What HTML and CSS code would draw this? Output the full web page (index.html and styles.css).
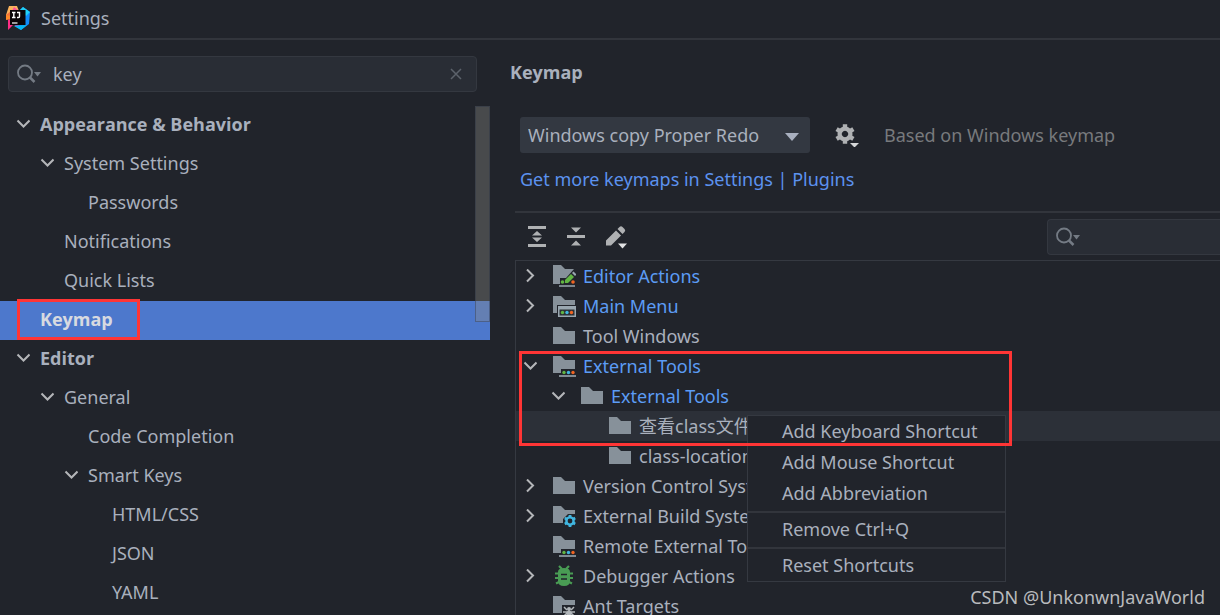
FILE: index.html
```html
<!DOCTYPE html>
<html lang="en">
<head>
<meta charset="utf-8">
<title>Settings</title>
<link rel="stylesheet" href="styles.css">
</head>
<body>
<svg class="defs" aria-hidden="true">
  <symbol id="down" viewBox="0 0 14 14"><path d="M1.500 3.500l6 6 6-6" fill="none" stroke="#b4b6b9" stroke-width="2"/></symbol>
  <symbol id="right" viewBox="0 0 14 14"><path d="M4 .5l6 6-6 6" fill="none" stroke="#b4b6b9" stroke-width="2"/></symbol>
  <symbol id="folder" viewBox="0 0 24 24"><path d="M1 3h8l4 4h10v13H1z" fill="#87919a"/></symbol>
  <symbol id="search" viewBox="0 0 26 20"><circle cx="8" cy="8.500" r="7" fill="none" stroke="#747b84" stroke-width="1.800"/><path d="M12.500 13l5 5" stroke="#747b84" stroke-width="2.500"/><path d="M17 8h7l-3.500 4.500z" fill="#747b84"/></symbol>
  <symbol id="tools" viewBox="0 0 24 24"><path d="M1 2h8l4 4h10v9H9v4H1z" fill="#87919a"/><circle cx="12" cy="18.500" r="1.700" fill="#62b543"/><circle cx="16.500" cy="18.500" r="1.700" fill="#40b6e0"/><circle cx="21" cy="18.500" r="1.700" fill="#f26522"/><path d="M7 22h17" stroke="#9aa7b0" stroke-width="1.600"/></symbol>
</svg>
<header class="titlebar">
  <svg class="logo" viewBox="0 0 24 24" aria-hidden="true">
    <path d="M3 0h8l2 5-9 5-4-1z" fill="#fbb35d"/><path d="M0 9l5-4v9l-5-1z" fill="#f4713a"/><path d="M0 9l5 1v3l-5 1z" fill="#ff8a2a"/><path d="M8 1l5 4H6z" fill="#fe4f9a"/><path d="M14 4l3-3 7 5-1 12-8 6-6-4z" fill="#118bfa"/><path d="M17 1l7 5-4 4-6-6z" fill="#20cff5"/><path d="M2 14l4-1 7 7-6-1-5 5z" fill="#fe2d86"/><path d="M8 20l7 4 6-5z" fill="#07b7f2"/><path d="M4 4h15.500v15H4z" fill="#0b0508"/><path d="M6 6.500h3.500M7.800 6.500v5M6 11.500h3.500M11 6.500h2.500v4q0 1-1 1H11" fill="none" stroke="#fff" stroke-width="1.400"/><path d="M6 17h5.500" stroke="#ddd" stroke-width="1.400"/>
  </svg>
  <span>Settings</span>
</header>
<div class="layout">
  <aside class="sidebar">
    <div class="search">
      <svg class="search-icon" aria-hidden="true"><use href="#search"/></svg>
      <input type="text" value="key" aria-label="Search settings">
      <button class="clear" aria-label="Clear search"><svg viewBox="0 0 12 12"><path d="M1 1l10 10M11 1L1 11" stroke="#5c626b" stroke-width="1.500"/></svg></button>
    </div>
    <div class="nav-area">
      <ul class="nav">
        <li class="strong"><button class="toggle" aria-label="Collapse Appearance &amp; Behavior"><svg><use href="#down"/></svg></button><span>Appearance &amp; Behavior</span></li>
        <li class="level1"><button class="toggle" aria-label="Collapse System Settings"><svg><use href="#down"/></svg></button><span>System Settings</span></li>
        <li class="level2 leaf">Passwords</li>
        <li class="level1 leaf">Notifications</li>
        <li class="level1 leaf">Quick Lists</li>
        <li class="strong leaf selected">Keymap<span class="mark mark-nav"></span></li>
        <li class="strong"><button class="toggle" aria-label="Collapse Editor"><svg><use href="#down"/></svg></button><span>Editor</span></li>
        <li class="level1"><button class="toggle" aria-label="Collapse General"><svg><use href="#down"/></svg></button><span>General</span></li>
        <li class="level2 leaf">Code Completion</li>
        <li class="level2"><button class="toggle" aria-label="Collapse Smart Keys"><svg><use href="#down"/></svg></button><span>Smart Keys</span></li>
        <li class="level3 leaf">HTML/CSS</li>
        <li class="level3 leaf">JSON</li>
        <li class="level3 leaf">YAML</li>
      </ul>
      <div class="scrollbar"></div>
    </div>
  </aside>
  <main class="content">
    <h1>Keymap</h1>
    <div class="scheme">
      <div class="select">
        <select aria-label="Keymap scheme"><option>Windows copy Proper Redo</option></select>
        <svg viewBox="0 0 14 8" aria-hidden="true"><path d="M0 0h14L7 8z" fill="#a9b0bf"/></svg>
      </div>
      <button class="icon gear" aria-label="Keymap actions"><svg viewBox="0 0 24 24"><g fill="#afb1b3"><path fill-rule="evenodd" d="M10 3.500a7.500 7.500 0 1 0 .01 0zM10 7.800a3.200 3.200 0 1 1-.01 0z"/><path d="M7.800 1.300h4.400v4H7.800zM7.800 16.700h4.400v4H7.800z"/><path d="M7.800 1.300h4.400v4H7.800zM7.800 16.700h4.400v4H7.800z" transform="rotate(60 10 11)"/><path d="M7.800 1.300h4.400v4H7.800zM7.800 16.700h4.400v4H7.800z" transform="rotate(120 10 11)"/></g><path d="M15 20h9l-4.500 4.500z" fill="#d6d7d9"/></svg></button>
      <span class="hint">Based on Windows keymap</span>
    </div>
    <a class="link" href="#plugins">Get more keymaps in Settings | Plugins</a>
    <section class="actions">
      <div class="toolbar">
        <button class="icon" aria-label="Expand all"><svg viewBox="0 0 24 24"><path d="M3 2.500h18M3 20.500h18" stroke="#afb1b3" stroke-width="3"/><path d="M12 6l5 4.500H7zM12 17l5-4.500H7z" fill="#afb1b3"/></svg></button>
        <button class="icon" aria-label="Collapse all"><svg viewBox="0 0 24 24"><path d="M3 11.500h18" stroke="#afb1b3" stroke-width="3"/><path d="M7 2.500h10l-5 5zM7 20.500h10l-5-5z" fill="#afb1b3"/></svg></button>
        <button class="icon" aria-label="Edit shortcut"><svg viewBox="0 0 24 24"><path d="M3 20.500v-5L13 5.500l5 5L8 20.500zM14.500 4l2-2q1.500-1.500 3 0l2 2q1.500 1.500 0 3l-2 2z" fill="#afb1b3"/><path d="M15 18.500h9l-4.500 5z" fill="#e1e2e3"/></svg></button>
        <div class="search action-search">
          <svg class="search-icon" aria-hidden="true"><use href="#search"/></svg>
          <input type="text" aria-label="Search actions">
        </div>
      </div>
      <div class="tree-area">
        <ul class="tree">
          <li><button class="toggle" aria-label="Expand Editor Actions"><svg><use href="#right"/></svg></button><svg class="kind" viewBox="0 0 24 24"><path d="M1 1h8l4 4h9l-8 9H8v6H1z" fill="#87919a"/><circle cx="10.500" cy="18" r="1.800" fill="#62b543"/><circle cx="21" cy="18" r="1.800" fill="#f26522"/><path d="M13 19v-3l6-6 3 3-6 6z" fill="#62b543"/><path d="M20 9l1.500-1.500 3 3L23 12z" fill="#9aa7b0"/><path d="M7 22h16" stroke="#9aa7b0" stroke-width="1.500"/></svg><span class="changed">Editor Actions</span></li>
          <li><button class="toggle" aria-label="Expand Main Menu"><svg><use href="#right"/></svg></button><svg class="kind" viewBox="0 0 24 24"><path d="M1 2h8l4 4h10v5H5v8H1z" fill="#87919a"/><path d="M6 12h18v11H6z" fill="#9aa7b0"/><path d="M7.500 15.500h15V21.500h-15z" fill="#2b3035"/><circle cx="10.500" cy="18.500" r="1.700" fill="#62b543"/><circle cx="15" cy="18.500" r="1.700" fill="#40b6e0"/><circle cx="19.500" cy="18.500" r="1.700" fill="#f26522"/></svg><span class="changed">Main Menu</span></li>
          <li class="no-toggle"><svg class="kind"><use href="#folder"/></svg><span>Tool Windows</span></li>
          <li><button class="toggle" aria-label="Collapse External Tools"><svg><use href="#down"/></svg></button><svg class="kind"><use href="#tools"/></svg><span class="changed">External Tools</span></li>
          <li class="level1"><button class="toggle" aria-label="Collapse External Tools group"><svg><use href="#down"/></svg></button><svg class="kind"><use href="#folder"/></svg><span class="changed">External Tools</span></li>
          <li class="level2 no-toggle current"><svg class="kind"><use href="#folder"/></svg><span>查看class文件</span></li>
          <li class="level2 no-toggle"><svg class="kind"><use href="#folder"/></svg><span>class-location</span></li>
          <li><button class="toggle" aria-label="Expand Version Control Systems"><svg><use href="#right"/></svg></button><svg class="kind"><use href="#folder"/></svg><span>Version Control Systems</span></li>
          <li><button class="toggle" aria-label="Expand External Build Systems"><svg><use href="#right"/></svg></button><svg class="kind" viewBox="0 0 24 24"><path d="M1 2h8l4 4h10v4h-7l-5 5v4H1z" fill="#87919a"/><circle cx="18" cy="17" r="3.600" fill="none" stroke="#40b6e0" stroke-width="2.400"/><path d="M18 11v2.500M18 20.500V23M12.800 14l2.200 1.200M21 18.800l2.200 1.200M12.800 20l2.200-1.200M21 15.200l2.200-1.200" stroke="#40b6e0" stroke-width="2.800"/></svg><span>External Build Systems</span></li>
          <li class="no-toggle"><svg class="kind"><use href="#tools"/></svg><span>Remote External Tools</span></li>
          <li><button class="toggle" aria-label="Expand Debugger Actions"><svg><use href="#right"/></svg></button><svg class="kind" viewBox="0 0 24 24"><path d="M7 2l3 3M17 2l-3 3M3 9.500h18M3 14h18M4 19.500l4-2M20 19.500l-4-2" stroke="#499c54" stroke-width="2.200"/><path d="M6 8q0-4 6-4t6 4v9q0 5-6 5t-6-5z" fill="#499c54"/><path d="M9 10.500h6M9 15h6" stroke="#21242b" stroke-width="1.600"/></svg><span>Debugger Actions</span></li>
          <li class="no-toggle"><svg class="kind" viewBox="0 0 24 24"><path d="M1 2h8l4 4h10v5H10v8H1z" fill="#87919a"/><path d="M12 13l3 3M22 13l-3 3M11 18h12M12 22l3-3M22 22l-3-3" stroke="#b2b7bb" stroke-width="1.500"/><circle cx="17" cy="15" r="2" fill="#b2b7bb"/><ellipse cx="17" cy="20" rx="2.500" ry="3.500" fill="#b2b7bb"/></svg><span>Ant Targets</span></li>
        </ul>
        <div class="menu" role="menu">
          <button role="menuitem">Add Keyboard Shortcut</button>
          <button role="menuitem">Add Mouse Shortcut</button>
          <button role="menuitem">Add Abbreviation</button>
          <hr>
          <button role="menuitem">Remove Ctrl+Q</button>
          <hr>
          <button role="menuitem">Reset Shortcuts</button>
        </div>
        <span class="mark mark-tree"></span>
      </div>
    </section>
  </main>
</div>
<div class="credit">CSDN @UnkonwnJavaWorld</div>
</body>
</html>
```
FILE: styles.css
```css
* { box-sizing: border-box; }
body {
  margin: 0;
  height: 100vh;
  display: flex;
  flex-direction: column;
  overflow: hidden;
  position: relative;
  background: #21242b;
  color: #a9b0bd;
  font: 18px/24px "Noto Sans", "Noto Sans CJK SC", sans-serif;
}
button, input, select { font: inherit; color: inherit; }
button { background: none; border: 0; padding: 0; }
ul { list-style: none; margin: 0; padding: 0; }
svg { display: block; flex: none; }
.defs { position: absolute; width: 0; height: 0; }
.titlebar {
  flex: none;
  display: flex;
  align-items: center;
  gap: 11px;
  height: 40px;
  padding: 0 6px 2px;
  border-bottom: 2px solid #32353c;
}
.logo { width: 24px; height: 24px; }
.layout { flex: 1; display: flex; min-height: 0; }
.sidebar { flex: none; width: 490px; padding-top: 16px; }
.search {
  display: flex;
  align-items: center;
  height: 36px;
  padding: 0 14px 0 8px;
  background: #292d35;
  border: 1px solid #343840;
  border-radius: 4px;
}
.sidebar .search { margin: 0 13px 14px 8px; }
.search-icon { width: 26px; height: 20px; }
.search input {
  flex: 1;
  min-width: 0;
  margin-left: 10px;
  padding: 0;
  background: none;
  border: 0;
  outline: 0;
}
.clear svg { width: 12px; height: 12px; }
.nav-area { position: relative; }
.nav li {
  position: relative;
  display: flex;
  align-items: center;
  gap: 10px;
  height: 39px;
  padding: 0 0 4px 16px;
}
.toggle { flex: none; }
.toggle svg { width: 14px; height: 14px; }
.nav .level1 { padding-left: 40px; }
.nav .level2 { padding-left: 64px; }
.nav .leaf { padding-left: 40px; }
.nav .level1.leaf { padding-left: 64px; }
.nav .level2.leaf { padding-left: 88px; }
.nav .level3.leaf { padding-left: 112px; }
.strong, h1 { font-family: "Open Sans", sans-serif; font-weight: 700; }
.nav .selected { background: #4d78cc; color: #d7dae0; }
.scrollbar {
  position: absolute;
  top: 0;
  right: 0;
  width: 15px;
  height: 216px;
  background: rgba(140, 140, 135, .36);
  border: 1px solid rgba(40, 50, 70, .4);
}
.mark { position: absolute; border: 3px solid #ff3535; pointer-events: none; }
.mark-nav { top: -2px; left: 17px; width: 123px; height: 41px; }
.content { flex: 1; min-width: 0; display: flex; flex-direction: column; padding: 20px 0 0 20px; }
h1 { margin: 0 0 33px; font-size: 18px; line-height: 24px; }
.scheme { display: flex; align-items: center; height: 36px; margin-left: 10px; }
.select { position: relative; width: 290px; }
.select select {
  appearance: none;
  width: 100%;
  height: 36px;
  padding: 0 8px;
  background: #333841;
  border: 0;
  border-radius: 3px;
}
.select svg { position: absolute; right: 11px; top: 16px; width: 14px; height: 8px; pointer-events: none; }
.icon svg { width: 24px; height: 24px; }
.gear { margin: 0 25px; }
.hint { color: #787a7d; }
.link { align-self: flex-start; margin: 14px 0 20px 10px; color: #5c92ef; text-decoration: none; }
.actions { flex: 1; min-height: 0; display: flex; flex-direction: column; margin-left: 5px; border-top: 2px solid #32353c; }
.toolbar { flex: none; display: flex; align-items: center; gap: 15px; height: 47px; padding-left: 10px; }
.action-search { width: 173px; margin-left: auto; border-right: 0; border-radius: 4px 0 0 4px; }
.tree-area { position: relative; flex: 1; border-top: 1px solid #353941; border-left: 1px solid #353941; }
.tree li { display: flex; align-items: center; height: 30px; padding-left: 7px; white-space: nowrap; }
.tree .no-toggle { padding-left: 36px; }
.tree .level1 { padding-left: 35px; }
.tree .level2.no-toggle { padding-left: 92px; }
.kind { width: 24px; height: 24px; margin-right: 7px; }
.tree .toggle + .kind { margin-left: 15px; }
.changed { color: #5c9cf5; }
.current { background: #2c3038; }
.menu {
  position: absolute;
  top: 154px;
  left: 231px;
  width: 259px;
  display: flex;
  flex-direction: column;
  background: #21242b;
  border: 1px solid #353941;
}
.menu button { height: 31px; padding: 0 0 2px 34px; text-align: left; }
.menu hr { width: 100%; height: 2px; margin: 2px 0 1px; background: #32353c; border: 0; }
.mark-tree { top: 90px; left: 3px; width: 493px; height: 95px; }
.credit { position: absolute; right: 15px; bottom: 6px; color: #b9bbbe; }
```
